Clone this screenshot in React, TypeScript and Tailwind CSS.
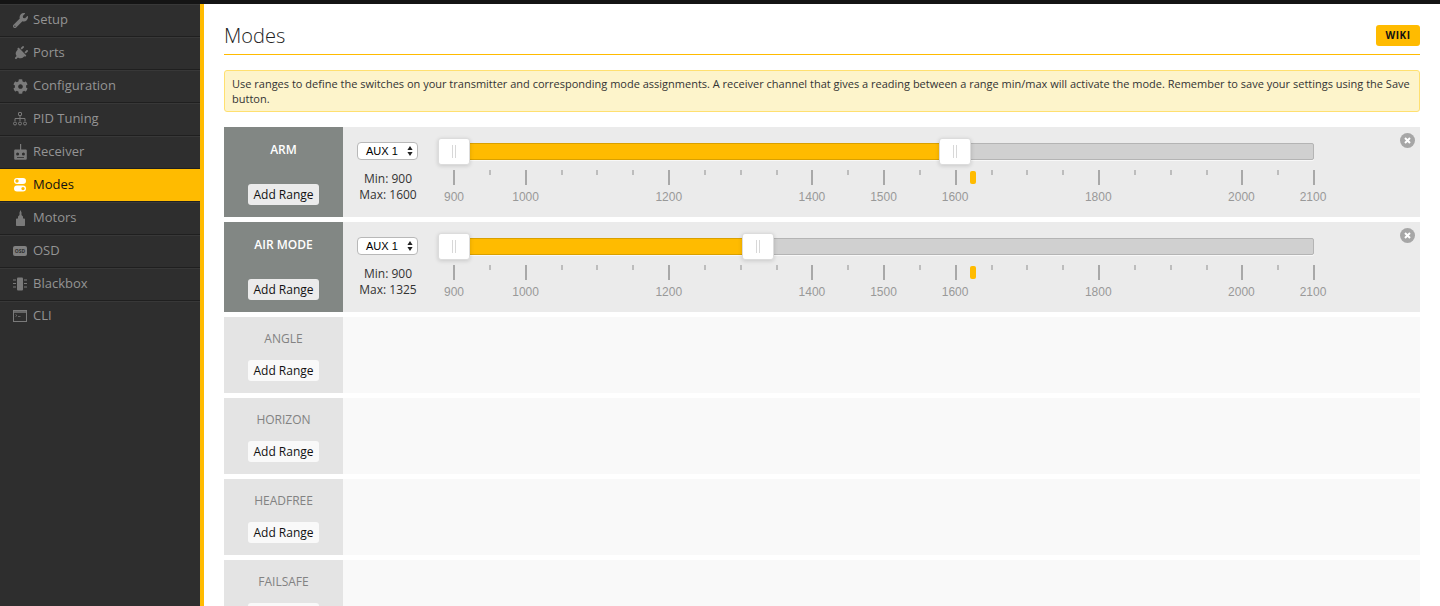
import React from 'react';
import { FaWrench, FaPlug, FaCog } from 'react-icons/fa';

const SANS = "font-['Open_Sans',sans-serif]";

function PidIcon() {
  return (
    <svg width="14" height="14" viewBox="0 0 14 14" fill="none" stroke="currentColor" strokeWidth="1">
      <rect x="5.5" y="0.5" width="3" height="3" rx="0.5" />
      <path d="M7 3.5V9M2 9V6.5h10V9" />
      <circle cx="2" cy="11.5" r="1.5" />
      <circle cx="7" cy="11.5" r="1.5" />
      <circle cx="12" cy="11.5" r="1.5" />
    </svg>
  );
}

function ReceiverIcon() {
  return (
    <svg width="13" height="16" viewBox="0 0 13 16" fill="currentColor">
      <rect x="6" y="0" width="1.2" height="6" />
      <path fillRule="evenodd" d="M1.2 5.5h10.6a1 1 0 0 1 1 1v8.3a1 1 0 0 1-1 1H1.2a1 1 0 0 1-1-1V6.500a1 1 0 0 1 1-1zM3.600 8.500a1.500 1.500 0 1 0 0 3 1.500 1.500 0 0 0 0-3zm5.800 0a1.500 1.500 0 1 0 0 3 1.500 1.500 0 0 0 0-3z" />
      <rect x="3" y="13" width="7" height="0.8" fill="#2e2e2e" />
    </svg>
  );
}

function ModesIcon() {
  return (
    <svg width="12" height="14" viewBox="0 0 12 14" fill="currentColor">
      <path fillRule="evenodd" d="M3 0h6a3 3 0 0 1 0 6H3a3 3 0 0 1 0-6zm0 1.300a1.700 1.700 0 1 0 0 3.400 1.700 1.700 0 0 0 0-3.400z" />
      <path fillRule="evenodd" d="M3 7.600h6a3 3 0 0 1 0 6H3a3 3 0 0 1 0-6zm6 1.300a1.700 1.700 0 1 0 0 3.400 1.700 1.700 0 0 0 0-3.400z" />
    </svg>
  );
}

function MotorsIcon() {
  return (
    <svg width="9" height="16" viewBox="0 0 9 16" fill="currentColor">
      <path d="M4.500 0l1 2.500V5l1.500 1.500V8.500h1.200a.8.8 0 0 1 .8.800v5.900a.8.8 0 0 1-.8.800H.8a.8.8 0 0 1-.8-.800V9.300a.8.8 0 0 1 .8-.800H2V6.500L3.500 5V2.500z" />
    </svg>
  );
}

function OsdIcon() {
  return (
    <div className="flex h-[10px] w-[14px] items-center justify-center rounded-[2px] bg-[#808080] text-[5px] font-bold leading-none text-[#2e2e2e]">
      OSD
    </div>
  );
}

function BlackboxIcon() {
  return (
    <svg width="14" height="14" viewBox="0 0 14 14" fill="currentColor">
      <rect x="4" y="0.5" width="6" height="13" rx="1" />
      <rect x="0" y="2.500" width="3" height="1" />
      <rect x="0" y="6" width="3" height="1" />
      <rect x="0" y="9.500" width="3" height="1" />
      <rect x="11" y="2.500" width="3" height="1" />
      <rect x="11" y="6" width="3" height="1" />
      <rect x="11" y="9.500" width="3" height="1" />
    </svg>
  );
}

function CliIcon() {
  return (
    <svg width="14" height="12" viewBox="0 0 14 12" fill="none" stroke="currentColor">
      <rect x="0.5" y="0.5" width="13" height="11" />
      <path d="M0.500 2h13" strokeWidth="1.500" />
      <path d="M2.500 4.500l1.500 1-1.500 1M5 6.500h2.500" strokeWidth="0.7" />
    </svg>
  );
}

const navItems: { label: string; icon: React.ReactNode; active?: boolean }[] = [
  { label: 'Setup', icon: <FaWrench size={15} /> },
  { label: 'Ports', icon: <FaPlug size={15} className="rotate-45" /> },
  { label: 'Configuration', icon: <FaCog size={15} /> },
  { label: 'PID Tuning', icon: <PidIcon /> },
  { label: 'Receiver', icon: <ReceiverIcon /> },
  { label: 'Modes', icon: <ModesIcon />, active: true },
  { label: 'Motors', icon: <MotorsIcon /> },
  { label: 'OSD', icon: <OsdIcon /> },
  { label: 'Blackbox', icon: <BlackboxIcon /> },
  { label: 'CLI', icon: <CliIcon /> },
];

function Sidebar() {
  return (
    <nav className="w-[204px] shrink-0 border-r-[4px] border-[#ffbb00] bg-[#2e2e2e]">
      {navItems.map((item) =>
        item.active ? (
          <div key={item.label} className="flex h-[33px] items-center border-b border-[#222] bg-[#ffbb00] text-[13px] text-[#111]">
            <span className="flex w-[33px] justify-center pl-[7px] text-white">{item.icon}</span>
            {item.label}
          </div>
        ) : (
          <div
            key={item.label}
            className="flex h-[33px] items-center border-b border-[#1f1f1f] text-[13px] text-[#949494] shadow-[inset_0_1px_0_#383838] last:h-[29px] last:border-b-0"
          >
            <span className="flex w-[33px] justify-center pl-[7px] text-[#7a7a7a]">{item.icon}</span>
            {item.label}
          </div>
        ),
      )}
    </nav>
  );
}

const bigPips = [900, 1000, 1200, 1400, 1500, 1600, 1800, 2000, 2100];
const smallPips = [950, 1050, 1100, 1150, 1250, 1300, 1350, 1450, 1550, 1650, 1700, 1750, 1850, 1900, 1950, 2050];
const toX = (v: number) => ((v - 900) / 1200) * 859;
const pipX = (v: number) => ((v - 900) / 1200) * 860;

function Handle({ value }: { value: number }) {
  return (
    <div
      className="absolute top-[11px] flex h-[27px] w-[32px] -translate-x-1/2 items-center justify-center gap-[2px] rounded-[3px] border border-[#dcdcdc] bg-white shadow-[0_1px_4px_rgba(0,0,0,0.15)]"
      style={{ left: toX(value) }}
    >
      <span className="h-[13px] w-px bg-[#d8d8d8]" />
      <span className="h-[13px] w-px bg-[#d8d8d8]" />
    </div>
  );
}

function RangeSlider({ max }: { max: number }) {
  return (
    <div className="relative ml-[36px] h-full w-[860px]">
      <div className="absolute left-0 top-[16px] h-[17px] w-full rounded-[2px] border border-[#b4b4b4] bg-[#d0d0d0] shadow-[0_1px_0_#f8f8f8]" />
      <div
        className="absolute left-0 top-[16px] h-[17px] border-y border-[#d9a000] bg-[#ffbb00] shadow-[0_1px_0_#f8f8f8]"
        style={{ width: toX(max) }}
      />
      {smallPips.map((v) => (
        <div key={v} className="absolute top-[43px] h-[5px] w-[2px] -translate-x-1/2 bg-[#bdbdbd]" style={{ left: pipX(v) }} />
      ))}
      {bigPips.map((v) => (
        <React.Fragment key={v}>
          <div className="absolute top-[43px] h-[15px] w-[2px] -translate-x-1/2 bg-[#a8a8a8]" style={{ left: pipX(v) }} />
          <div
            className="absolute top-[63px] -translate-x-1/2 font-['Liberation_Sans',sans-serif] text-[12px] leading-[14px] text-[#999]"
            style={{ left: toX(v) }}
          >
            {v}
          </div>
        </React.Fragment>
      ))}
      <div className="absolute left-[519px] top-[44px] h-[13px] w-[6px] -translate-x-1/2 rounded-[2px] bg-[#ffbb00]" />
      <Handle value={900} />
      <Handle value={max} />
    </div>
  );
}

function AuxSelect() {
  return (
    <div className="relative h-[18px] w-[61px] rounded-[4px] border border-[#b8b8b8] bg-white pl-[8px] font-['Liberation_Sans',sans-serif] text-[11px] leading-[16px] text-black">
      AUX 1
      <svg className="absolute right-[4px] top-[3px]" width="6" height="10" viewBox="0 0 6 10" fill="#222">
        <path d="M3 0l2.600 4H.4zM3 10L.4 6h5.200z" />
      </svg>
    </div>
  );
}

function ModeRow({ name, max }: { name: string; max?: number }) {
  const active = max !== undefined;
  return (
    <div className={`flex shrink-0 ${active ? 'h-[90px] bg-[#ebebeb]' : 'h-[76px] bg-[#f9f9f9]'}`}>
      <div
        className={`flex w-[119px] shrink-0 flex-col items-center justify-between pb-[12px] ${
          active ? 'bg-[#828784] pt-[14px] text-white' : 'bg-[#e4e4e4] pt-[13px] text-[#828282]'
        }`}
      >
        <div className={`text-[12px] leading-[18px] ${active ? 'font-semibold' : ''}`}>{name}</div>
        <div className={`flex h-[21px] w-[71px] items-center justify-center rounded-[3px] text-[12px] text-[#111] ${active ? 'bg-[#ebebeb]' : 'bg-[#f9f9f9]'}`}>
          Add Range
        </div>
      </div>
      {active && (
        <div className="relative flex flex-1 pl-[14px]">
          <div className="flex w-[61px] shrink-0 flex-col items-center pt-[15px]">
            <AuxSelect />
            <div className="mt-[11px] pl-[1px] text-center text-[12px] leading-[16px] text-[#333]">
              <div>Min: 900</div>
              <div>Max: {max}</div>
            </div>
          </div>
          <RangeSlider max={max} />
          <div className="absolute right-[5px] top-[6px] flex h-[15px] w-[15px] items-center justify-center rounded-full bg-[#a6a6a6]">
            <svg width="7" height="7" viewBox="0 0 7 7" stroke="white" strokeWidth="2">
              <path d="M1 1l5 5M6 1L1 6" />
            </svg>
          </div>
        </div>
      )}
    </div>
  );
}

export default function App() {
  return (
    <div className={`flex h-screen flex-col overflow-hidden bg-white ${SANS}`}>
      <div className="h-[4px] shrink-0 bg-[#141414]" />
      <div className="flex min-h-0 flex-1">
        <Sidebar />
        <main className="flex min-w-0 flex-1 flex-col px-[20px]">
          <div className="flex h-[51px] shrink-0 items-center justify-between border-b border-[#ffbb00] pb-[8px] pt-[21px]">
            <h1 className="text-[20px] font-light leading-none text-[#222]">Modes</h1>
            <div className="flex h-[21px] w-[44px] items-center justify-center rounded-[3px] bg-[#ffbb00] text-[10px] font-bold tracking-[0.5px] text-[#111]">
              WIKI
            </div>
          </div>
          <div className="mt-[15px] shrink-0 rounded-[3px] border border-[#ffe070] bg-[#fdf4cb] px-[7px] py-[5px] text-[11px] leading-[15px] text-[#333]">
            Use ranges to define the switches on your transmitter and corresponding mode assignments. A receiver channel that gives a reading between a range min/max will activate the mode. Remember to save your settings using the Save button.
          </div>
          <div className="mt-[15px] flex flex-col gap-[5px]">
            <ModeRow name="ARM" max={1600} />
            <ModeRow name="AIR MODE" max={1325} />
            <ModeRow name="ANGLE" />
            <ModeRow name="HORIZON" />
            <ModeRow name="HEADFREE" />
            <ModeRow name="FAILSAFE" />
          </div>
        </main>
      </div>
    </div>
  );
}
